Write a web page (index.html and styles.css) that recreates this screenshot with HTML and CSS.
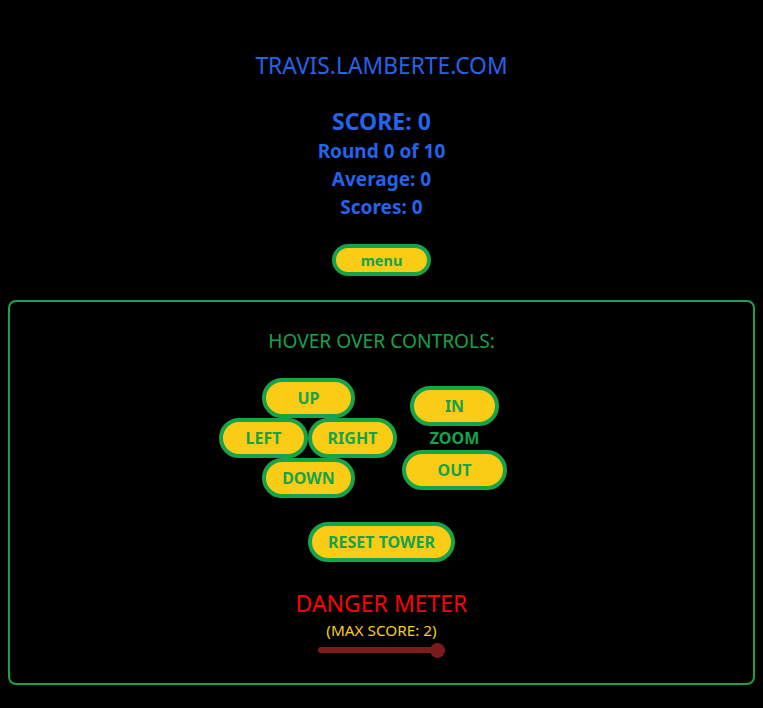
FILE: index.html
```html
<!DOCTYPE html>
<html lang="en">
<head>
<meta charset="utf-8">
<title>Travis Lamberte</title>
<link rel="stylesheet" href="styles.css">
</head>
<body>
<header class="top">
  <h1 class="site">TRAVIS.LAMBERTE.COM</h1>
  <div class="stats">
    <div class="score">SCORE: 0</div>
    <div class="stat first">Round 0 of 10</div>
    <div class="stat">Average: 0</div>
    <div class="stat">Scores: 0</div>
  </div>
  <button class="btn menu">menu</button>
</header>
<section class="panel">
  <h2 class="hover">HOVER OVER CONTROLS:</h2>
  <div class="controls">
    <div class="dpad">
      <div class="row"><button class="btn dir up">UP</button></div>
      <div class="row">
        <button class="btn dir left">LEFT</button>
        <button class="btn dir right">RIGHT</button>
      </div>
      <div class="row"><button class="btn dir down">DOWN</button></div>
    </div>
    <div class="zoomcol">
      <div class="zoom">
        <button class="btn zin">IN</button>
        <div class="zlabel">ZOOM</div>
        <button class="btn zout">OUT</button>
      </div>
    </div>
  </div>
  <div class="resetrow"><button class="btn reset">RESET TOWER</button></div>
  <div class="danger">DANGER METER</div>
  <div class="maxscore">(MAX SCORE: 2)</div>
  <div class="meter"><input class="slider" type="range" min="0" max="2" value="2"></div>
</section>
</body>
</html>
```
FILE: styles.css
```css
html, body {
  background: #000;
}
body {
  margin: 8px;
  font-family: "Noto Sans", "Open Sans", sans-serif;
  color: #2563eb;
}
.top {
  display: flex;
  flex-direction: column;
  align-items: center;
}
.site {
  margin: 43px 0 0 0;
  font-size: 22.8px;
  font-weight: 400;
  line-height: 30px;
  color: #2563eb;
}
.stats {
  margin-top: 25px;
  display: flex;
  flex-direction: column;
  align-items: center;
  font-weight: 700;
}
.score {
  font-size: 23px;
  line-height: 30px;
}
.stat {
  font-size: 19px;
  line-height: 28px;
}
.stat.first {
  margin-top: 1px;
}
.btn {
  font-family: "Noto Sans", "Open Sans", sans-serif;
  font-weight: 700;
  color: #16a34a;
  background: #facc15;
  border: 4px solid #16a34a;
  border-radius: 999px;
  box-sizing: border-box;
  padding: 0;
  cursor: pointer;
}
.menu {
  margin-top: 23px;
  width: 99px;
  height: 32px;
  font-size: 14.5px;
}
.panel {
  margin-top: 24px;
  border: 2px solid #16a34a;
  border-radius: 8px;
  height: 385px;
  box-sizing: border-box;
  display: flex;
  flex-direction: column;
  align-items: center;
}
.hover {
  margin: 25px 0 0 0;
  font-size: 19.2px;
  font-weight: 400;
  line-height: 27px;
  color: #16a34a;
}
.controls {
  margin-top: 24px;
  display: flex;
  align-items: center;
  gap: 5px;
}
.dpad {
  width: 178px;
  display: flex;
  flex-direction: column;
}
.row {
  display: flex;
  justify-content: center;
}
.dir {
  height: 40px;
  font-size: 16px;
}
.up, .down { width: 93px; margin-left: 1px; }
.left { width: 89px; }
.right { width: 89px; }
.zoomcol {
  width: 142px;
}
.zoom {
  width: 105px;
  display: flex;
  flex-direction: column;
  align-items: center;
}
.zin { width: 89px; height: 40px; font-size: 16px; }
.zout { width: 105px; height: 40px; font-size: 16px; }
.zlabel {
  height: 24px;
  line-height: 24px;
  font-size: 16px;
  font-weight: 700;
  color: #16a34a;
}
.resetrow {
  margin-top: 24px;
}
.reset {
  width: 147px;
  height: 40px;
  font-size: 16px;
}
.danger {
  margin-top: 26px;
  font-size: 23px;
  line-height: 30px;
  color: #ff0000;
}
.maxscore {
  font-size: 15.3px;
  line-height: 20px;
  color: #facc15;
  margin-top: 2px;
}
.meter {
  margin-top: 3px;
  width: 127px;
  height: 14px;
  display: flex;
  align-items: center;
}
.slider {
  -webkit-appearance: none;
  appearance: none;
  margin: 0;
  width: 127px;
  height: 6px;
  border-radius: 3px;
  background: #7f1d1d;
  outline: none;
}
.slider::-webkit-slider-thumb {
  -webkit-appearance: none;
  appearance: none;
  width: 15px;
  height: 15px;
  border-radius: 50%;
  background: #7a1a1a;
  border: none;
}
```
